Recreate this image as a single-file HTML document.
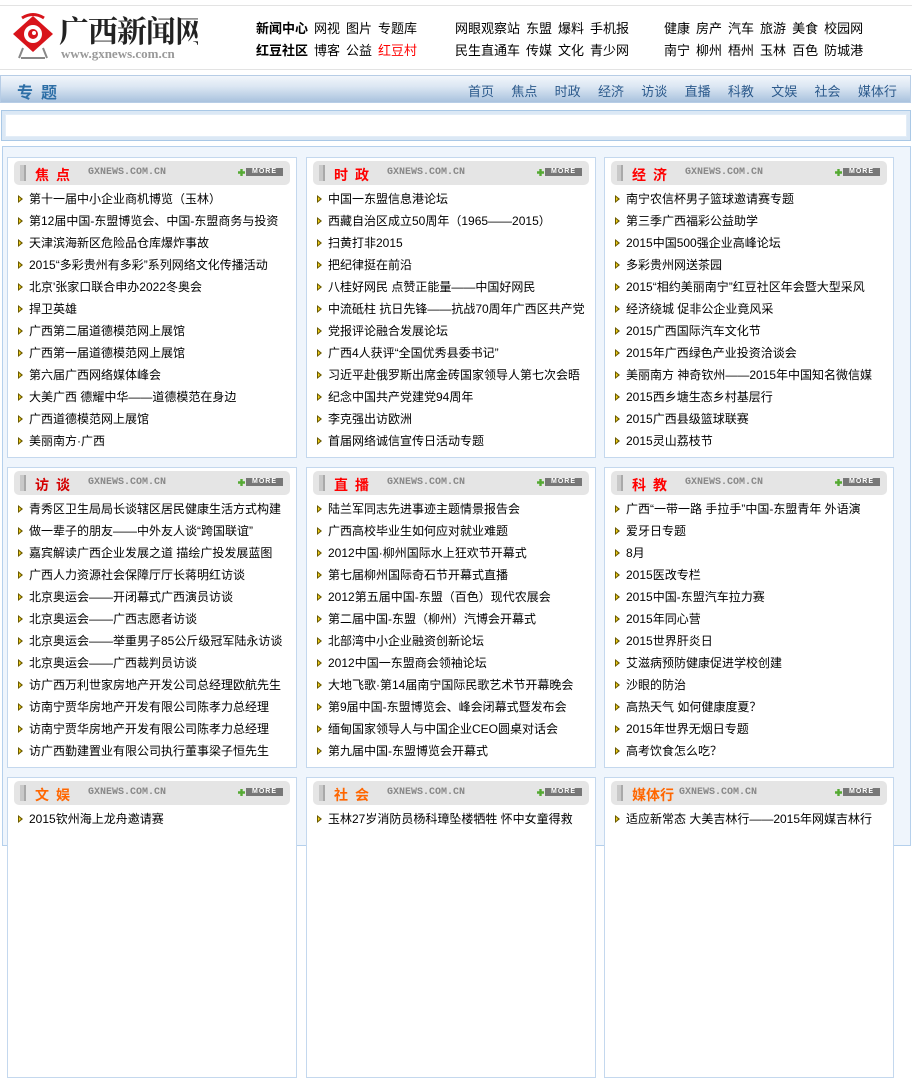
<!DOCTYPE html>
<html><head><meta charset="utf-8">
<style>
*{margin:0;padding:0;box-sizing:border-box}
body{width:912px;height:829px;overflow:hidden;background:#fff;font-family:"Liberation Sans","Noto Sans CJK SC","WenQuanYi Zen Hei",sans-serif;font-size:13px;color:#000;position:relative}
.hdr{position:absolute;left:-2px;top:5px;width:920px;height:65px;border:1px solid #e3e3e3;background:#fff}
.logo{position:absolute;left:13px;top:12px}
.links{position:absolute;font-size:13px;line-height:22px;white-space:nowrap}
.links span{margin-right:6px}
.nav{position:absolute;left:0;top:75px;width:911px;height:28px;border:1px solid #b7cde6;background:linear-gradient(#f2f6fb 0,#dce7f3 40%,#a9c2de 100%)}
.nav .zt{position:absolute;left:16px;top:3px;font-size:16px;font-weight:bold;color:#2c6ea6;letter-spacing:8px}
.nav .items{position:absolute;left:467px;top:5px;color:#2c5a8c;font-size:13px;white-space:nowrap}
.nav .items span{margin-right:17.3px}
.blank{position:absolute;left:1px;top:110px;width:910px;height:31px;border:1px solid #a9c8e6;background:#dbe8f5;padding:3px}
.blank div{width:100%;height:100%;background:#fff;border:1px solid #e3edf7}
.main{position:absolute;left:2px;top:146px;width:909px;height:700px;border:1px solid #b5d0ec;background:#eff5fc}
.box{position:absolute;width:290px;height:301px;border:1px solid #c4d8ee;background:#fff}
.tb{position:absolute;left:6px;top:3px;width:276px;height:24px;background:#e5e5e5;border-radius:5px}
.tb .fl{position:absolute;left:6px;top:4px;width:6px;height:16px;background:#c9c9c9;border-right:2px solid #a9a9a9}
.tb .t{position:absolute;left:21px;top:4px;font-size:14px;font-weight:bold;letter-spacing:7px}
.tb .g{position:absolute;left:74px;top:6px;font-size:10px;color:#888;font-family:"Liberation Mono",monospace;font-weight:bold;letter-spacing:0}
.tb .m{position:absolute;right:7px;top:7px;width:45px;height:8px}
.tb .m b{position:absolute;left:8px;top:0;width:37px;height:8px;background:#777;color:#fff;font-size:7px;line-height:8px;text-align:center;font-family:"Liberation Sans",sans-serif;letter-spacing:1px}
ul{position:absolute;left:9px;top:30px;list-style:none}
li{height:22px;line-height:22px;padding-left:12px;position:relative;white-space:nowrap;font-size:12px}
li:before{content:"";position:absolute;left:1px;top:7px;border-left:5px solid #6b5a00;border-top:4px solid transparent;border-bottom:4px solid transparent}
li:after{content:"";position:absolute;left:2px;top:9px;border-left:2px solid #f3d21a;border-top:2px solid transparent;border-bottom:2px solid transparent}
.red{color:#f00}.dred{color:#d40000}.org{color:#f60}
</style></head><body>
<div class="hdr"></div>
<svg class="logo" width="185" height="50" viewBox="0 0 185 50">
<polygon points="0,22 20,4 40,22 20,40" fill="#d8141b"/>
<path d="M9,6 Q20,-1 31,6" stroke="#d8141b" stroke-width="3" fill="none"/>
<circle cx="20" cy="22" r="9" fill="#fff"/>
<circle cx="20" cy="22" r="5" fill="#d8141b"/>
<circle cx="21" cy="21" r="2" fill="#fff"/>
<path d="M10,36 L6,46 M30,36 L34,46 M8,46 L32,46" stroke="#888" stroke-width="2" fill="none"/>
<text x="46" y="30" font-size="30" font-weight="bold" fill="#222" font-family="Noto Serif CJK SC,serif" letter-spacing="-1">广西新闻网</text>
<text x="48" y="46" font-size="13" fill="#999" font-family="Liberation Serif,serif" font-weight="bold">www.gxnews.com.cn</text>
</svg>
<div class="links" style="left:256px;top:18px"><span style="font-weight:bold">新闻中心</span><span>网视</span><span>图片</span><span>专题库</span><br><span style="font-weight:bold">红豆社区</span><span>博客</span><span>公益</span><span style="color:#f00">红豆村</span></div>
<div class="links" style="left:455px;top:18px"><span>网眼观察站</span><span>东盟</span><span>爆料</span><span>手机报</span><br><span>民生直通车</span><span>传媒</span><span>文化</span><span>青少网</span></div>
<div class="links" style="left:664px;top:18px"><span>健康</span><span>房产</span><span>汽车</span><span>旅游</span><span>美食</span><span>校园网</span><br><span>南宁</span><span>柳州</span><span>梧州</span><span>玉林</span><span>百色</span><span>防城港</span></div>
<div class="nav"><div class="zt">专题</div><div class="items"><span>首页</span><span>焦点</span><span>时政</span><span>经济</span><span>访谈</span><span>直播</span><span>科教</span><span>文娱</span><span>社会</span><span>媒体行</span></div></div>
<div class="blank"><div></div></div>
<div class="main"></div>

<div class="box" style="left:7px;top:157px"><div class="tb"><div class="fl"></div><div class="t red">焦点</div><div class="g">GXNEWS.COM.CN</div><div class="m"><svg width="7" height="7" style="position:absolute;top:1px"><path d="M0,3.5H7M3.5,0V7" stroke="#5a3" stroke-width="2.4"/></svg><b>MORE</b></div></div>
<ul><li>第十一届中小企业商机博览（玉林）</li><li>第12届中国-东盟博览会、中国-东盟商务与投资</li><li>天津滨海新区危险品仓库爆炸事故</li><li>2015“多彩贵州有多彩”系列网络文化传播活动</li><li>北京'张家口联合申办2022冬奥会</li><li>捍卫英雄</li><li>广西第二届道德模范网上展馆</li><li>广西第一届道德模范网上展馆</li><li>第六届广西网络媒体峰会</li><li>大美广西 德耀中华——道德模范在身边</li><li>广西道德模范网上展馆</li><li>美丽南方·广西</li></ul></div>

<div class="box" style="left:306px;top:157px"><div class="tb"><div class="fl"></div><div class="t red">时政</div><div class="g">GXNEWS.COM.CN</div><div class="m"><svg width="7" height="7" style="position:absolute;top:1px"><path d="M0,3.5H7M3.5,0V7" stroke="#5a3" stroke-width="2.4"/></svg><b>MORE</b></div></div>
<ul><li>中国一东盟信息港论坛</li><li>西藏自治区成立50周年（1965——2015）</li><li>扫黄打非2015</li><li>把纪律挺在前沿</li><li>八桂好网民 点赞正能量——中国好网民</li><li>中流砥柱 抗日先锋——抗战70周年广西区共产党</li><li>党报评论融合发展论坛</li><li>广西4人获评“全国优秀县委书记”</li><li>习近平赴俄罗斯出席金砖国家领导人第七次会晤</li><li>纪念中国共产党建党94周年</li><li>李克强出访欧洲</li><li>首届网络诚信宣传日活动专题</li></ul></div>

<div class="box" style="left:604px;top:157px"><div class="tb"><div class="fl"></div><div class="t red">经济</div><div class="g">GXNEWS.COM.CN</div><div class="m"><svg width="7" height="7" style="position:absolute;top:1px"><path d="M0,3.5H7M3.5,0V7" stroke="#5a3" stroke-width="2.4"/></svg><b>MORE</b></div></div>
<ul><li>南宁农信杯男子篮球邀请赛专题</li><li>第三季广西福彩公益助学</li><li>2015中国500强企业高峰论坛</li><li>多彩贵州网送茶园</li><li>2015“相约美丽南宁”红豆社区年会暨大型采风</li><li>经济绕城 促非公企业竟风采</li><li>2015广西国际汽车文化节</li><li>2015年广西绿色产业投资洽谈会</li><li>美丽南方 神奇钦州——2015年中国知名微信媒</li><li>2015西乡塘生态乡村基层行</li><li>2015广西县级篮球联赛</li><li>2015灵山荔枝节</li></ul></div>

<div class="box" style="left:7px;top:467px"><div class="tb"><div class="fl"></div><div class="t dred">访谈</div><div class="g">GXNEWS.COM.CN</div><div class="m"><svg width="7" height="7" style="position:absolute;top:1px"><path d="M0,3.5H7M3.5,0V7" stroke="#5a3" stroke-width="2.4"/></svg><b>MORE</b></div></div>
<ul><li>青秀区卫生局局长谈辖区居民健康生活方式构建</li><li>做一辈子的朋友——中外友人谈“跨国联谊”</li><li>嘉宾解读广西企业发展之道 描绘广投发展蓝图</li><li>广西人力资源社会保障厅厅长蒋明红访谈</li><li>北京奥运会——开闭幕式广西演员访谈</li><li>北京奥运会——广西志愿者访谈</li><li>北京奥运会——举重男子85公斤级冠军陆永访谈</li><li>北京奥运会——广西裁判员访谈</li><li>访广西万利世家房地产开发公司总经理欧航先生</li><li>访南宁贾华房地产开发有限公司陈孝力总经理</li><li>访南宁贾华房地产开发有限公司陈孝力总经理</li><li>访广西勤建置业有限公司执行董事梁子恒先生</li></ul></div>

<div class="box" style="left:306px;top:467px"><div class="tb"><div class="fl"></div><div class="t red">直播</div><div class="g">GXNEWS.COM.CN</div><div class="m"><svg width="7" height="7" style="position:absolute;top:1px"><path d="M0,3.5H7M3.5,0V7" stroke="#5a3" stroke-width="2.4"/></svg><b>MORE</b></div></div>
<ul><li>陆兰军同志先进事迹主题情景报告会</li><li>广西高校毕业生如何应对就业难题</li><li>2012中国·柳州国际水上狂欢节开幕式</li><li>第七届柳州国际奇石节开幕式直播</li><li>2012第五届中国-东盟（百色）现代农展会</li><li>第二届中国-东盟（柳州）汽博会开幕式</li><li>北部湾中小企业融资创新论坛</li><li>2012中国一东盟商会领袖论坛</li><li>大地飞歌·第14届南宁国际民歌艺术节开幕晚会</li><li>第9届中国-东盟博览会、峰会闭幕式暨发布会</li><li>缅甸国家领导人与中国企业CEO圆桌对话会</li><li>第九届中国-东盟博览会开幕式</li></ul></div>

<div class="box" style="left:604px;top:467px"><div class="tb"><div class="fl"></div><div class="t red">科教</div><div class="g">GXNEWS.COM.CN</div><div class="m"><svg width="7" height="7" style="position:absolute;top:1px"><path d="M0,3.5H7M3.5,0V7" stroke="#5a3" stroke-width="2.4"/></svg><b>MORE</b></div></div>
<ul><li>广西“一带一路 手拉手”中国-东盟青年 外语演</li><li>爱牙日专题</li><li>8月</li><li>2015医改专栏</li><li>2015中国-东盟汽车拉力赛</li><li>2015年同心营</li><li>2015世界肝炎日</li><li>艾滋病预防健康促进学校创建</li><li>沙眼的防治</li><li>高热天气 如何健康度夏？</li><li>2015年世界无烟日专题</li><li>高考饮食怎么吃？</li></ul></div>

<div class="box" style="left:7px;top:777px"><div class="tb"><div class="fl"></div><div class="t org">文娱</div><div class="g">GXNEWS.COM.CN</div><div class="m"><svg width="7" height="7" style="position:absolute;top:1px"><path d="M0,3.5H7M3.5,0V7" stroke="#5a3" stroke-width="2.4"/></svg><b>MORE</b></div></div>
<ul><li>2015钦州海上龙舟邀请赛</li></ul></div>

<div class="box" style="left:306px;top:777px"><div class="tb"><div class="fl"></div><div class="t org">社会</div><div class="g">GXNEWS.COM.CN</div><div class="m"><svg width="7" height="7" style="position:absolute;top:1px"><path d="M0,3.5H7M3.5,0V7" stroke="#5a3" stroke-width="2.4"/></svg><b>MORE</b></div></div>
<ul><li>玉林27岁消防员杨科璋坠楼牺牲 怀中女童得救</li></ul></div>

<div class="box" style="left:604px;top:777px"><div class="tb"><div class="fl"></div><div class="t org" style="letter-spacing:0">媒体行</div><div class="g" style="left:68px">GXNEWS.COM.CN</div><div class="m"><svg width="7" height="7" style="position:absolute;top:1px"><path d="M0,3.5H7M3.5,0V7" stroke="#5a3" stroke-width="2.4"/></svg><b>MORE</b></div></div>
<ul><li>适应新常态 大美吉林行——2015年网媒吉林行</li></ul></div>
</body></html>
